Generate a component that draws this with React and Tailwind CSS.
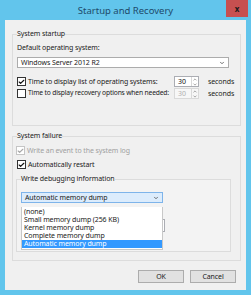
import { ChevronDown, ChevronUp, Check } from "lucide-react";

const font = { fontFamily: '"Noto Sans", "Open Sans", sans-serif' };

const Box = ({ checked, disabled }) => (
  <span
    className={`w-[9px] h-[9px] border bg-white flex items-center justify-center shrink-0 ${
      disabled ? "border-[#c5c5c5]" : "border-[#333333]"
    }`}
  >
    {checked && (
      <Check
        className={`w-[8px] h-[8px] ${disabled ? "text-[#a8a8a8]" : "text-[#111]"}`}
        strokeWidth={4}
      />
    )}
  </span>
);

const Spin = ({ disabled }) => (
  <div
    className={`w-[25px] h-[11px] border flex items-center shrink-0 ${
      disabled ? "border-[#d9d9d9] bg-[#f7f7f7]" : "border-[#abadb3] bg-white"
    }`}
  >
    <span className={`flex-1 pl-[3px] leading-none ${disabled ? "text-[#b0b0b0]" : "text-[#111]"}`}>
      30
    </span>
    <div className="w-[7px] h-full flex flex-col border-l border-[#d9d9d9]">
      <div className="flex-1 flex items-center justify-center">
        <ChevronUp className="w-[6px] h-[5px] text-[#777]" strokeWidth={3} />
      </div>
      <div className="flex-1 flex items-center justify-center">
        <ChevronDown className="w-[6px] h-[5px] text-[#777]" strokeWidth={3} />
      </div>
    </div>
  </div>
);

const dumps = [
  "(none)",
  "Small memory dump (256 KB)",
  "Kernel memory dump",
  "Complete memory dump",
  "Automatic memory dump",
];

export default function App() {
  return (
    <div
      style={font}
      className="w-[251px] h-[295px] bg-[#62c5ec] flex flex-col text-[7px] tracking-[-0.1px] text-[#1a1a1a] overflow-hidden"
    >
      <div className="h-[20px] flex items-center relative">
        <div className="flex-1 text-center text-[9.5px] tracking-normal text-[#1e4a6a] leading-none pt-[1px]">
          Startup and Recovery
        </div>
        <div className="absolute right-[3px] top-0 w-[22px] h-[17px] bg-[#c75050] flex items-center justify-center text-[8px] font-bold text-[#1a1a1a] leading-none">
          x
        </div>
      </div>

      <div className="mx-[5px] h-[270px] bg-[#f0f0f0] flex flex-col pl-[7px] pr-[5px] pt-[9px]">
        <fieldset className="border border-[#dcdcdc] px-[4px] pb-[26px]">
          <legend className="leading-[10px] px-[0px]">System startup</legend>
          <div className="mt-[4px] leading-[10px]">Default operating system:</div>
          <div className="mt-[4px] h-[11px] w-[212px] border border-[#acacac] bg-white flex items-center px-[3px]">
            <span className="flex-1 leading-none">Windows Server 2012 R2</span>
            <ChevronDown className="w-[6px] h-[6px] text-[#444]" strokeWidth={3} />
          </div>
          <div className="mt-[8px] h-[11px] flex items-center">
            <Box checked />
            <span className="ml-[2px] w-[146px] shrink-0 whitespace-nowrap leading-none">
              Time to display list of operating systems:
            </span>
            <Spin />
            <span className="ml-[9px] leading-none whitespace-nowrap">seconds</span>
          </div>
          <div className="mt-[1px] h-[11px] flex items-center">
            <Box />
            <span className="ml-[2px] w-[146px] shrink-0 whitespace-nowrap leading-none text-[6.7px] tracking-[-0.15px]">
              Time to display recovery options when needed:
            </span>
            <Spin disabled />
            <span className="ml-[9px] leading-none whitespace-nowrap">seconds</span>
          </div>
        </fieldset>

        <fieldset className="mt-[5px] border border-[#dcdcdc] pl-[3px] pr-[9px] pb-[8px]">
          <legend className="leading-[10px] ml-[1px]">System failure</legend>
          <div className="mt-[5px] h-[9px] flex items-center">
            <Box checked disabled />
            <span className="ml-[2px] leading-none text-[#a0a0a0]">
              Write an event to the system log
            </span>
          </div>
          <div className="mt-[5px] h-[9px] flex items-center ml-[1px]">
            <Box checked />
            <span className="ml-[2px] leading-none">Automatically restart</span>
          </div>

          <fieldset className="mt-[5px] border border-[#dcdcdc] bg-[#f3f3f3] px-[4px] pb-[19px] relative">
            <legend className="leading-[10px]">Write debugging information</legend>
            <div className="mt-[8px] h-[11px] w-[142px] border border-[#7eb4ea] bg-[#dcecfc] flex items-center px-[3px]">
              <span className="flex-1 leading-none">Automatic memory dump</span>
              <ChevronDown className="w-[6px] h-[6px] text-[#444]" strokeWidth={3} />
            </div>
            <div className="mt-[16px] h-[13px] w-[144px] border border-[#abadb3] bg-white" />
            <div className="absolute left-[4px] top-[23px] w-[142px] bg-white border border-t-0 border-[#c8c8c8] pt-[1px] pb-[1px]">
              {dumps.map((d, i) => (
                <div
                  key={d}
                  className={`h-[8px] leading-[8px] px-[2px] whitespace-nowrap ${
                    i === 4 ? "bg-[#3399ff] text-white" : ""
                  }`}
                >
                  {d}
                </div>
              ))}
            </div>
          </fieldset>
        </fieldset>

        <div className="mt-[9px] flex justify-end gap-[6px] pr-[5px]">
          <button className="w-[46px] h-[13px] border border-[#acacac] bg-[#e1e1e1] leading-none">
            OK
          </button>
          <button className="w-[46px] h-[13px] border border-[#acacac] bg-[#e1e1e1] leading-none">
            Cancel
          </button>
        </div>
      </div>
    </div>
  );
}
